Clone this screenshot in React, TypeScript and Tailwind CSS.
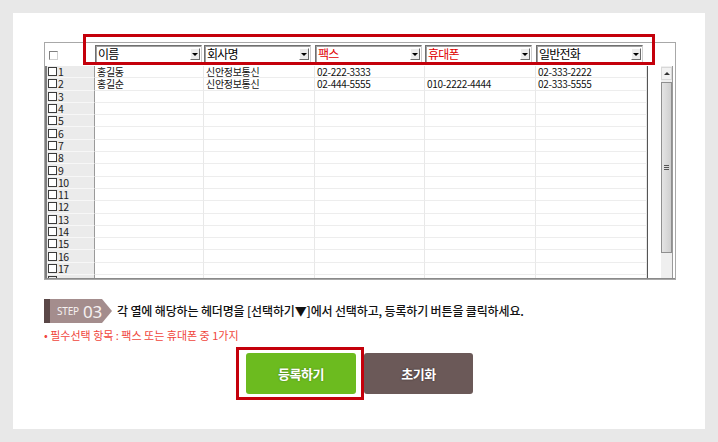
import React from 'react'

const kr = { fontFamily: '"Noto Sans CJK KR", "Noto Sans", sans-serif' }

const cols = [109, 111, 110, 111, 111]

const headers: { label: string; red: boolean }[] = [
  { label: '이름', red: false },
  { label: '회사명', red: false },
  { label: '팩스', red: true },
  { label: '휴대폰', red: true },
  { label: '일반전화', red: false },
]

const data: string[][] = [
  ['홍길동', '신안정보통신', '02-222-3333', '', '02-333-2222'],
  ['홍길순', '신안정보통신', '02-444-5555', '010-2222-4444', '02-333-5555'],
]

function SelectBox({ label, red }: { label: string; red: boolean }) {
  return (
    <div className="w-[107px] h-[18px] flex items-center bg-white border border-[#6f6f6f] border-b-[#cfcfcf] border-r-[#cfcfcf] shadow-[inset_1px_1px_0_#a0a0a0]">
      <span
        className={`flex-1 pl-[2px] text-[12px] leading-[16px] tracking-[-0.8px] ${red ? 'text-[#e00000]' : 'text-black'}`}
      >
        {label}
      </span>
      <span className="w-[10px] h-[12px] mr-[1px] flex items-center justify-center bg-[#ececec] border border-t-white border-l-white border-b-[#6a6a6a] border-r-[#6a6a6a]">
        <span className="w-0 h-0 border-l-[3px] border-r-[3px] border-t-[3px] border-l-transparent border-r-transparent border-t-black" />
      </span>
    </div>
  )
}

function Check() {
  return <span className="inline-block w-[9px] h-[9px] border border-[#3a3a3a] bg-white shrink-0" />
}

export default function App() {
  const rows = Array.from({ length: 17 }, (_, i) => i + 1)
  return (
    <div className="w-[718px] h-[442px] bg-[#e8e8e8] pt-[13px] pl-[13px]" style={kr}>
      <div className="relative w-[692px] h-[416px] bg-white pl-[31px] pt-[29px]">
        {/* grid */}
        <div className="w-[632px] h-[238px] border border-[#a8a8a8] flex flex-col">
          <div className="h-[23px] flex shrink-0">
            <div className="w-[50px] pl-[4px] pt-[8px]">
              <span className="block w-[9px] h-[9px] border border-[#808080] border-b-[#d0d0d0] border-r-[#d0d0d0] bg-white" />
            </div>
            {cols.map((w, i) => (
              <div key={i} className="pt-[2px]" style={{ width: w }}>
                <SelectBox label={headers[i].label} red={headers[i].red} />
              </div>
            ))}
          </div>
          <div className="flex flex-1 border-b border-[#8a8a8a] min-h-0">
            <div className="w-[602px] flex flex-col border-l-2 border-[#7d7d7d]">
              {rows.map((n) => {
                const d = data[n - 1] ?? ['', '', '', '', '']
                return (
                  <div key={n} className="flex h-[12.3px] shrink-0">
                    <div className="w-[48px] flex items-center gap-[1px] pl-[1px] bg-[#ebebeb] border-b border-b-[#f7f7f7] border-r border-r-[#9a9a9a] text-[10.5px] leading-[11px] text-[#222]">
                      <Check />
                      <span className="tracking-[-0.5px]">{n}</span>
                    </div>
                    {cols.map((w, i) => (
                      <div
                        key={i}
                        className="border-b border-b-[#ededed] border-r border-r-[#e8e8e8] pl-[2px] text-[10px] leading-[11px] tracking-[-0.3px] text-[#111] whitespace-nowrap"
                        style={{ width: w }}
                      >
                        {d[i]}
                      </div>
                    ))}
                  </div>
                )
              })}
              {/* partially visible next row */}
              <div className="flex flex-1">
                <div className="w-[48px] flex items-end pl-[1px] bg-[#ebebeb] border-r border-r-[#9a9a9a]">
                  <span className="block w-[9px] h-[2px] border-t border-l border-r border-[#3a3a3a]" />
                </div>
                {cols.map((w, i) => (
                  <div key={i} className="border-r border-r-[#e8e8e8]" style={{ width: w }} />
                ))}
              </div>
            </div>
            <div className="flex-1 border-l border-[#555] flex pl-[13px] pr-[2px]">
              <div className="w-[12px] flex flex-col bg-[#efefef] border-r border-[#9a9a9a]">
                <div className="h-[13px] mt-[1px] flex items-center justify-center bg-[#f2f2f2] border border-[#d8d8d8]">
                  <span className="w-0 h-0 border-l-[3px] border-r-[3px] border-b-[3px] border-l-transparent border-r-transparent border-b-[#333]" />
                </div>
                <div className="h-[171px] mt-[2px] flex items-center justify-center bg-gradient-to-r from-[#e4e4e4] to-[#cfcfcf] border border-[#8f8f8f]">
                  <span className="flex flex-col gap-[1px]">
                    <span className="block w-[5px] h-px bg-[#555]" />
                    <span className="block w-[5px] h-px bg-[#555]" />
                    <span className="block w-[5px] h-px bg-[#555]" />
                  </span>
                </div>
                <div className="flex-1" />
              </div>
            </div>
          </div>
        </div>

        {/* step */}
        <div className="flex items-center mt-[19px] h-[24px]">
          <div className="w-[6px] h-[24px] bg-[#5a4747]" />
          <div className="w-[62px] h-[24px] bg-[#a48d8d] flex items-center pl-[7px] gap-[4px] text-[#f6f1f1] [clip-path:polygon(0_0,52px_0,100%_50%,52px_100%,0_100%)]">
            <span className="text-[10px] tracking-[-0.2px] leading-none" style={{ fontFamily: '"Noto Sans", sans-serif' }}>
              STEP
            </span>
            <span className="text-[17px] leading-none" style={{ fontFamily: '"Noto Sans", sans-serif' }}>
              03
            </span>
          </div>
          <span className="ml-[5px] text-[12px] font-medium tracking-[-0.15px] text-[#111]">
            각 열에 해당하는 헤더명을 [선택하기▼]에서 선택하고, 등록하기 버튼을 클릭하세요.
          </span>
        </div>
        <div className="mt-[4px] text-[11px] leading-[16px] tracking-[0px] text-[#f0463c]">
          • 필수선택 항목 : 팩스 또는 휴대폰 중 1가지
        </div>

        {/* buttons */}
        <div className="flex mt-[4px] ml-[192px]">
          <div className="border-[3px] border-[#c4000b] pl-[7px] pr-[5px] py-[3px]">
            <button className="w-[110px] h-[41px] rounded-[3px] bg-[#6cbb1f] text-white text-[13px] font-bold tracking-[-0.5px] [text-shadow:0_0_2px_rgba(0,0,0,0.35)]">
              등록하기
            </button>
          </div>
          <button className="mt-[6px] w-[109px] h-[41px] rounded-[3px] bg-[#6b5958] text-white text-[13px] font-bold tracking-[-0.5px] [text-shadow:0_0_2px_rgba(0,0,0,0.5)]">
            초기화
          </button>
        </div>

        {/* highlight box over header selects */}
        <div className="absolute left-[70px] top-[21px] w-[572px] h-[31px] border-[3px] border-[#c4000b]" />
      </div>
    </div>
  )
}
